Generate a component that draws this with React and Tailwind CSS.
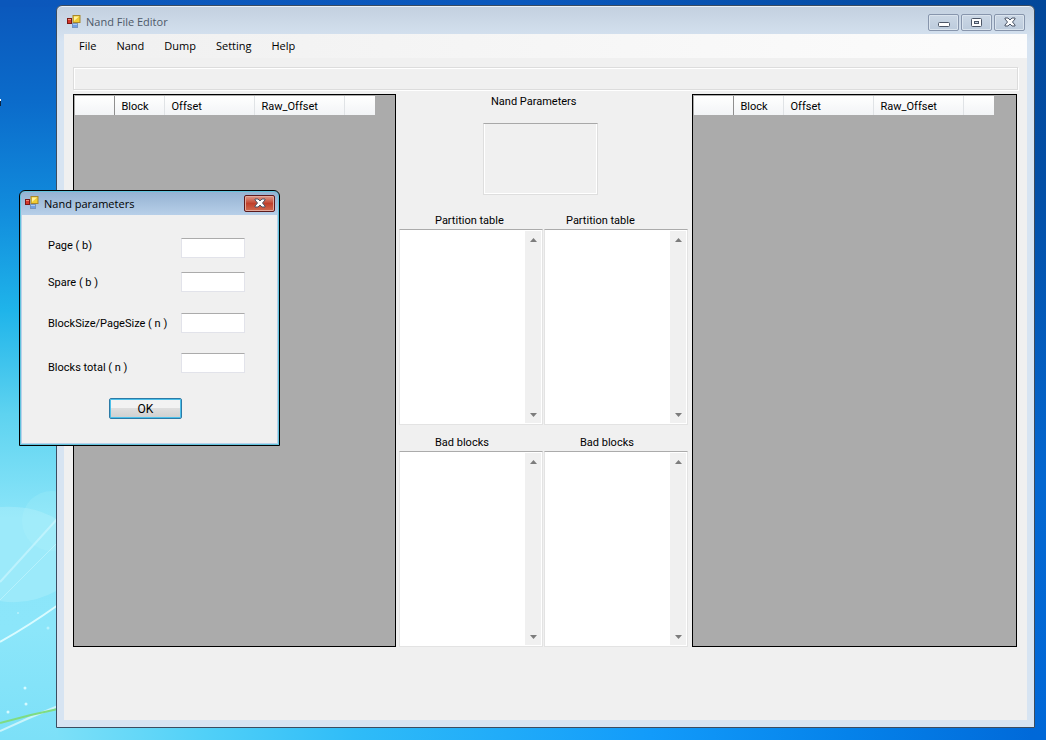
import React, { useState } from "react";

const menuItems = ["File", "Nand", "Dump", "Setting", "Help"];

const fields = [
  { id: "page", label: "Page ( b)", row: "h-[34px]", text: "pt-px" },
  { id: "spare", label: "Spare ( b )", row: "h-[41px]", text: "pt-1" },
  { id: "blockSize", label: "BlockSize/PageSize ( n )", row: "h-10", text: "pt-1" },
  { id: "blocks", label: "Blocks total ( n )", row: "h-[45px]", text: "pt-2" },
];

const FormIcon = () => (
  <svg width="14" height="14" viewBox="0 0 14 14" className="shrink-0">
    <rect x="0.5" y="3.5" width="4" height="5" fill="#d4372b" stroke="#7c1813" />
    <rect x="1" y="4" width="3" height="1" fill="#ef8d7c" />
    <rect x="5.5" y="8.5" width="5" height="4" fill="#6f9fe6" stroke="#7795bd" />
    <rect x="6" y="9" width="4" height="1" fill="#a9c9f5" />
    <rect x="6" y="0.5" width="7" height="7" fill="#f0cc32" stroke="#a8872c" />
    <path d="M7 1.5h5L7 6z" fill="#fff2a0" />
  </svg>
);

const CloseGlyph = () => (
  <svg width="12" height="10" viewBox="0 0 12 10">
    <path
      d="M1 1h3l2 2 2-2h3v1L8.500 5 11 8v1H8L6 7 4 9H1V8l2.500-3L1 2z"
      fill="#fff"
      stroke="#4b5566"
    />
  </svg>
);

const Wallpaper = () => (
  <svg
    className="absolute inset-0 h-full w-full"
    viewBox="0 0 1046 740"
    preserveAspectRatio="none"
  >
    <defs>
      <linearGradient id="left" x1="0" y1="0" x2="0" y2="1">
        <stop offset="0" stopColor="#0b57bb" />
        <stop offset="0.140" stopColor="#0b6ccb" />
        <stop offset="0.280" stopColor="#118bdc" />
        <stop offset="0.420" stopColor="#1fb4ea" />
        <stop offset="0.560" stopColor="#5ed3f0" />
        <stop offset="0.700" stopColor="#8be5f9" />
        <stop offset="0.850" stopColor="#8ce6fa" />
        <stop offset="1" stopColor="#7ce0f8" />
      </linearGradient>
      <linearGradient id="right" x1="0" y1="0" x2="0" y2="1">
        <stop offset="0" stopColor="#02479a" />
        <stop offset="0.250" stopColor="#034fa6" />
        <stop offset="0.650" stopColor="#0467d0" />
        <stop offset="1" stopColor="#0068d8" />
      </linearGradient>
      <linearGradient id="bottom" x1="0" y1="0" x2="1" y2="0">
        <stop offset="0" stopColor="#7ce0f8" />
        <stop offset="0.150" stopColor="#50d0f8" />
        <stop offset="0.300" stopColor="#2fbcf8" />
        <stop offset="0.600" stopColor="#129bfa" />
        <stop offset="0.800" stopColor="#0582ea" />
        <stop offset="1" stopColor="#0068d8" />
      </linearGradient>
      <linearGradient id="top" x1="0" y1="0" x2="1" y2="0">
        <stop offset="0" stopColor="#0b57bb" />
        <stop offset="0.500" stopColor="#0a58bd" />
        <stop offset="1" stopColor="#02479a" />
      </linearGradient>
    </defs>
    <rect width="1046" height="740" fill="url(#left)" />
    <rect x="58" y="725" width="988" height="15" fill="url(#bottom)" />
    <rect x="1030" width="16" height="740" fill="url(#right)" />
    <rect width="1046" height="7" fill="url(#top)" />
    <circle cx="52" cy="521" r="30" fill="#b6f3fc" opacity="0.200" />
    <path d="M0 507Q35 505 58 520V590Q30 606 0 601z" fill="#c2f6fc" opacity="0.300" />
    <path d="M0 582L58 518" stroke="#d2f8ff" strokeWidth="2" opacity="0.600" />
    <path d="M0 600L58 542" stroke="#d2f8ff" opacity="0.500" />
    <path d="M0 642Q30 625 58 605" stroke="#d9fbff" strokeWidth="2" fill="none" />
    <path d="M0 731Q28 718 58 706" stroke="#c9f4fb" strokeWidth="2" fill="none" />
    <path d="M0 723Q28 715 58 709" stroke="#7fdc82" strokeWidth="2" fill="none" />
    <g fill="#d5faff">
      <circle cx="25" cy="688" r="1.500" />
      <circle cx="26" cy="704" r="1.500" />
      <circle cx="8" cy="712" r="1.500" />
      <circle cx="48" cy="628" r="1.500" opacity="0.600" />
      <circle cx="18" cy="613" r="1" opacity="0.600" />
    </g>
    <path d="M0 99h1v2H0z" fill="#fff" />
    <path d="M0 101h1v5H0z" fill="#0b2340" />
  </svg>
);

const CaptionButton = ({ label, children }) => (
  <button
    aria-label={label}
    className="flex h-[17px] w-[31px] items-center justify-center rounded-xs border border-[#8795ac] bg-linear-to-b from-[#cbd7e5] to-[#bccbdc] shadow-[inset_0_0_0_1px_#dae4ee]"
  >
    {children}
  </button>
);

const DataGrid = ({ label }) => (
  <div className="border border-black bg-[#ababab]">
    <table
      aria-label={label}
      className="mt-px ml-px h-[19px] w-[300px] table-fixed border-collapse bg-linear-to-b from-white to-[#f2f4f6] text-left leading-[17px]"
    >
      <thead>
        <tr>
          <th className="w-[39px] border-r border-[#8f8f8f]"></th>
          <th className="w-[50px] border-r border-[#e0e3e6] pt-[2px] pl-[7px] font-normal">Block</th>
          <th className="w-[90px] border-r border-[#e0e3e6] pt-[2px] pl-[7px] font-normal">Offset</th>
          <th className="w-[90px] border-r border-[#e0e3e6] pt-[2px] pl-[7px] font-normal">Raw_Offset</th>
          <th></th>
        </tr>
      </thead>
    </table>
  </div>
);

const LogBox = ({ id, label, indent }) => {
  const [value, setValue] = useState("");

  return (
    <div className="flex min-w-0 flex-1 flex-col">
      <label htmlFor={id} className={`flex h-[19px] items-center pt-[3px] ${indent}`}>
        {label}
      </label>
      <div className="flex flex-1 border border-[#e3e3e3] border-t-[#ababab] bg-white">
        <textarea
          id={id}
          value={value}
          onChange={(e) => setValue(e.target.value)}
          className="min-w-0 flex-1 resize-none overflow-hidden outline-none"
        />
        <div className="my-px mr-px flex w-4 flex-col justify-between bg-[#f0f0f0]">
          <button aria-label="Scroll up" className="flex h-[17px] items-center justify-center">
            <svg width="7" height="4" viewBox="0 0 7 4">
              <path d="M0 4L3.500 0 7 4z" fill="#7c7c7c" />
            </svg>
          </button>
          <button aria-label="Scroll down" className="flex h-[17px] items-center justify-center">
            <svg width="7" height="4" viewBox="0 0 7 4">
              <path d="M0 0L3.500 4 7 0z" fill="#7c7c7c" />
            </svg>
          </button>
        </div>
      </div>
    </div>
  );
};

const MainWindow = () => (
  <main className="absolute top-[5px] right-[11px] bottom-3 left-14 flex flex-col rounded-t-md border border-[#3b4c60] bg-[#d7e4f2] bg-linear-to-b from-[#c3d0df] via-[#d7e4f2] via-5% to-[#d7e4f2] px-[7px] pb-[7px] shadow-[inset_0_1px_0_#e9f0f7]">
    <header className="flex h-7 shrink-0 items-center pl-[3px] font-['Open_Sans','Noto_Sans',sans-serif] text-[11px] text-[#4d5968]">
      <div className="pt-1">
        <FormIcon />
      </div>
      <h1 className="flex-1 pt-1 pl-[5px]">Nand File Editor</h1>
      <div className="flex gap-[2px] pt-1 pr-[2px]">
        <CaptionButton label="Minimize">
          <svg width="12" height="9" viewBox="0 0 12 9">
            <rect x="0.500" y="4.500" width="11" height="4" rx="1" fill="#fff" stroke="#4b5566" />
          </svg>
        </CaptionButton>
        <CaptionButton label="Maximize">
          <svg width="11" height="9" viewBox="0 0 11 9">
            <rect x="0.500" y="0.500" width="10" height="8" rx="1" fill="#fff" stroke="#4b5566" />
            <rect x="3.500" y="3.500" width="4" height="2" fill="#c6d3e1" stroke="#4b5566" />
          </svg>
        </CaptionButton>
        <CaptionButton label="Close">
          <CloseGlyph />
        </CaptionButton>
      </div>
    </header>
    <div className="flex flex-1 flex-col bg-[#f0f0f0]">
      <nav className="flex h-6 items-center gap-5 bg-linear-to-r from-[#f0f0f0] to-[#fcfcfc] pl-[15px] font-['Open_Sans','Noto_Sans',sans-serif] text-[11px]">
        {menuItems.map((item) => (
          <button key={item}>{item}</button>
        ))}
      </nav>
      <div className="mx-[9px] mt-[9px] h-[23px] border border-[#dcdcdc] shadow-[inset_1px_1px_0_#fff,1px_1px_0_#fff]" />
      <div className="mt-1 mr-[10px] mb-[73px] ml-[9px] grid flex-1 grid-cols-[323fr_296px_325fr]">
        <DataGrid label="Source blocks" />
        <section className="mr-1 ml-[3px] flex flex-col">
          <h2 className="pl-[92px] leading-4">Nand Parameters</h2>
          <div className="mt-[13px] ml-[84px] h-[72px] w-[115px] border border-[#dedede] border-t-[#a8a8a8] shadow-[inset_-1px_-1px_0_#fff,inset_1px_0_0_#fff]" />
          <div className="mt-[15px] flex flex-1 gap-px">
            <LogBox id="partition1" label="Partition table" indent="pl-9" />
            <LogBox id="partition2" label="Partition table" indent="pl-[22px]" />
          </div>
          <div className="mt-[7px] flex flex-1 gap-px">
            <LogBox id="bad1" label="Bad blocks" indent="pl-9" />
            <LogBox id="bad2" label="Bad blocks" indent="pl-9" />
          </div>
        </section>
        <DataGrid label="Target blocks" />
      </div>
    </div>
  </main>
);

const ParametersDialog = () => {
  const [values, setValues] = useState({ page: "", spare: "", blockSize: "", blocks: "" });

  return (
    <div
      role="dialog"
      aria-label="Nand parameters"
      className="absolute top-[190px] left-[19px] w-[261px] rounded-t-md border border-black bg-[#b9d1ea] bg-linear-to-b from-[#94b1d1] via-[#b9d1ea] via-10% to-[#b9d1ea] shadow-[inset_0_0_0_1px_#62c3dc]"
    >
      <div className="flex h-6 items-center pl-[5px] font-['Open_Sans','Noto_Sans',sans-serif] text-[11px]">
        <FormIcon />
        <h2 className="flex-1 pt-[2px] pl-[5px]">Nand parameters</h2>
        <button
          aria-label="Close"
          className="mr-1 flex h-[17px] w-[31px] items-center justify-center rounded-xs border border-[#5c1a1c] bg-linear-to-b from-[#dc9a8c] via-[#c0402c] to-[#cf6a50] shadow-[inset_0_0_0_1px_#e3a99c]"
        >
          <CloseGlyph />
        </button>
      </div>
      <form
        onSubmit={(e) => e.preventDefault()}
        className="mx-[2px] mb-[2px] bg-[#f0f0f0] pt-[23px] pb-6"
      >
        {fields.map((field) => (
          <div key={field.id} className={`flex items-start pl-[26px] ${field.row}`}>
            <label htmlFor={field.id} className={`w-[133px] leading-[14px] ${field.text}`}>
              {field.label}
            </label>
            <input
              id={field.id}
              type="text"
              value={values[field.id]}
              onChange={(e) => setValues({ ...values, [field.id]: e.target.value })}
              className="h-5 w-16 border border-[#e2e3ea] border-t-[#ababab] bg-white px-1 outline-none"
            />
          </div>
        ))}
        <button
          type="submit"
          className="ml-[87px] flex h-[21px] w-[73px] items-center justify-center rounded-xs border border-[#2c7aa6] bg-linear-to-b from-[#f2f2f2] from-50% via-[#dedede] via-50% to-[#cfcfcf] text-xs shadow-[inset_0_0_0_1px_#4cc0ea]"
        >
          OK
        </button>
      </form>
    </div>
  );
};

const App = () => {
  return (
    <div className="relative h-screen overflow-hidden font-[Roboto,'Liberation_Sans',sans-serif] text-[11px] text-black">
      <Wallpaper />
      <MainWindow />
      <ParametersDialog />
    </div>
  );
};

export default App;
